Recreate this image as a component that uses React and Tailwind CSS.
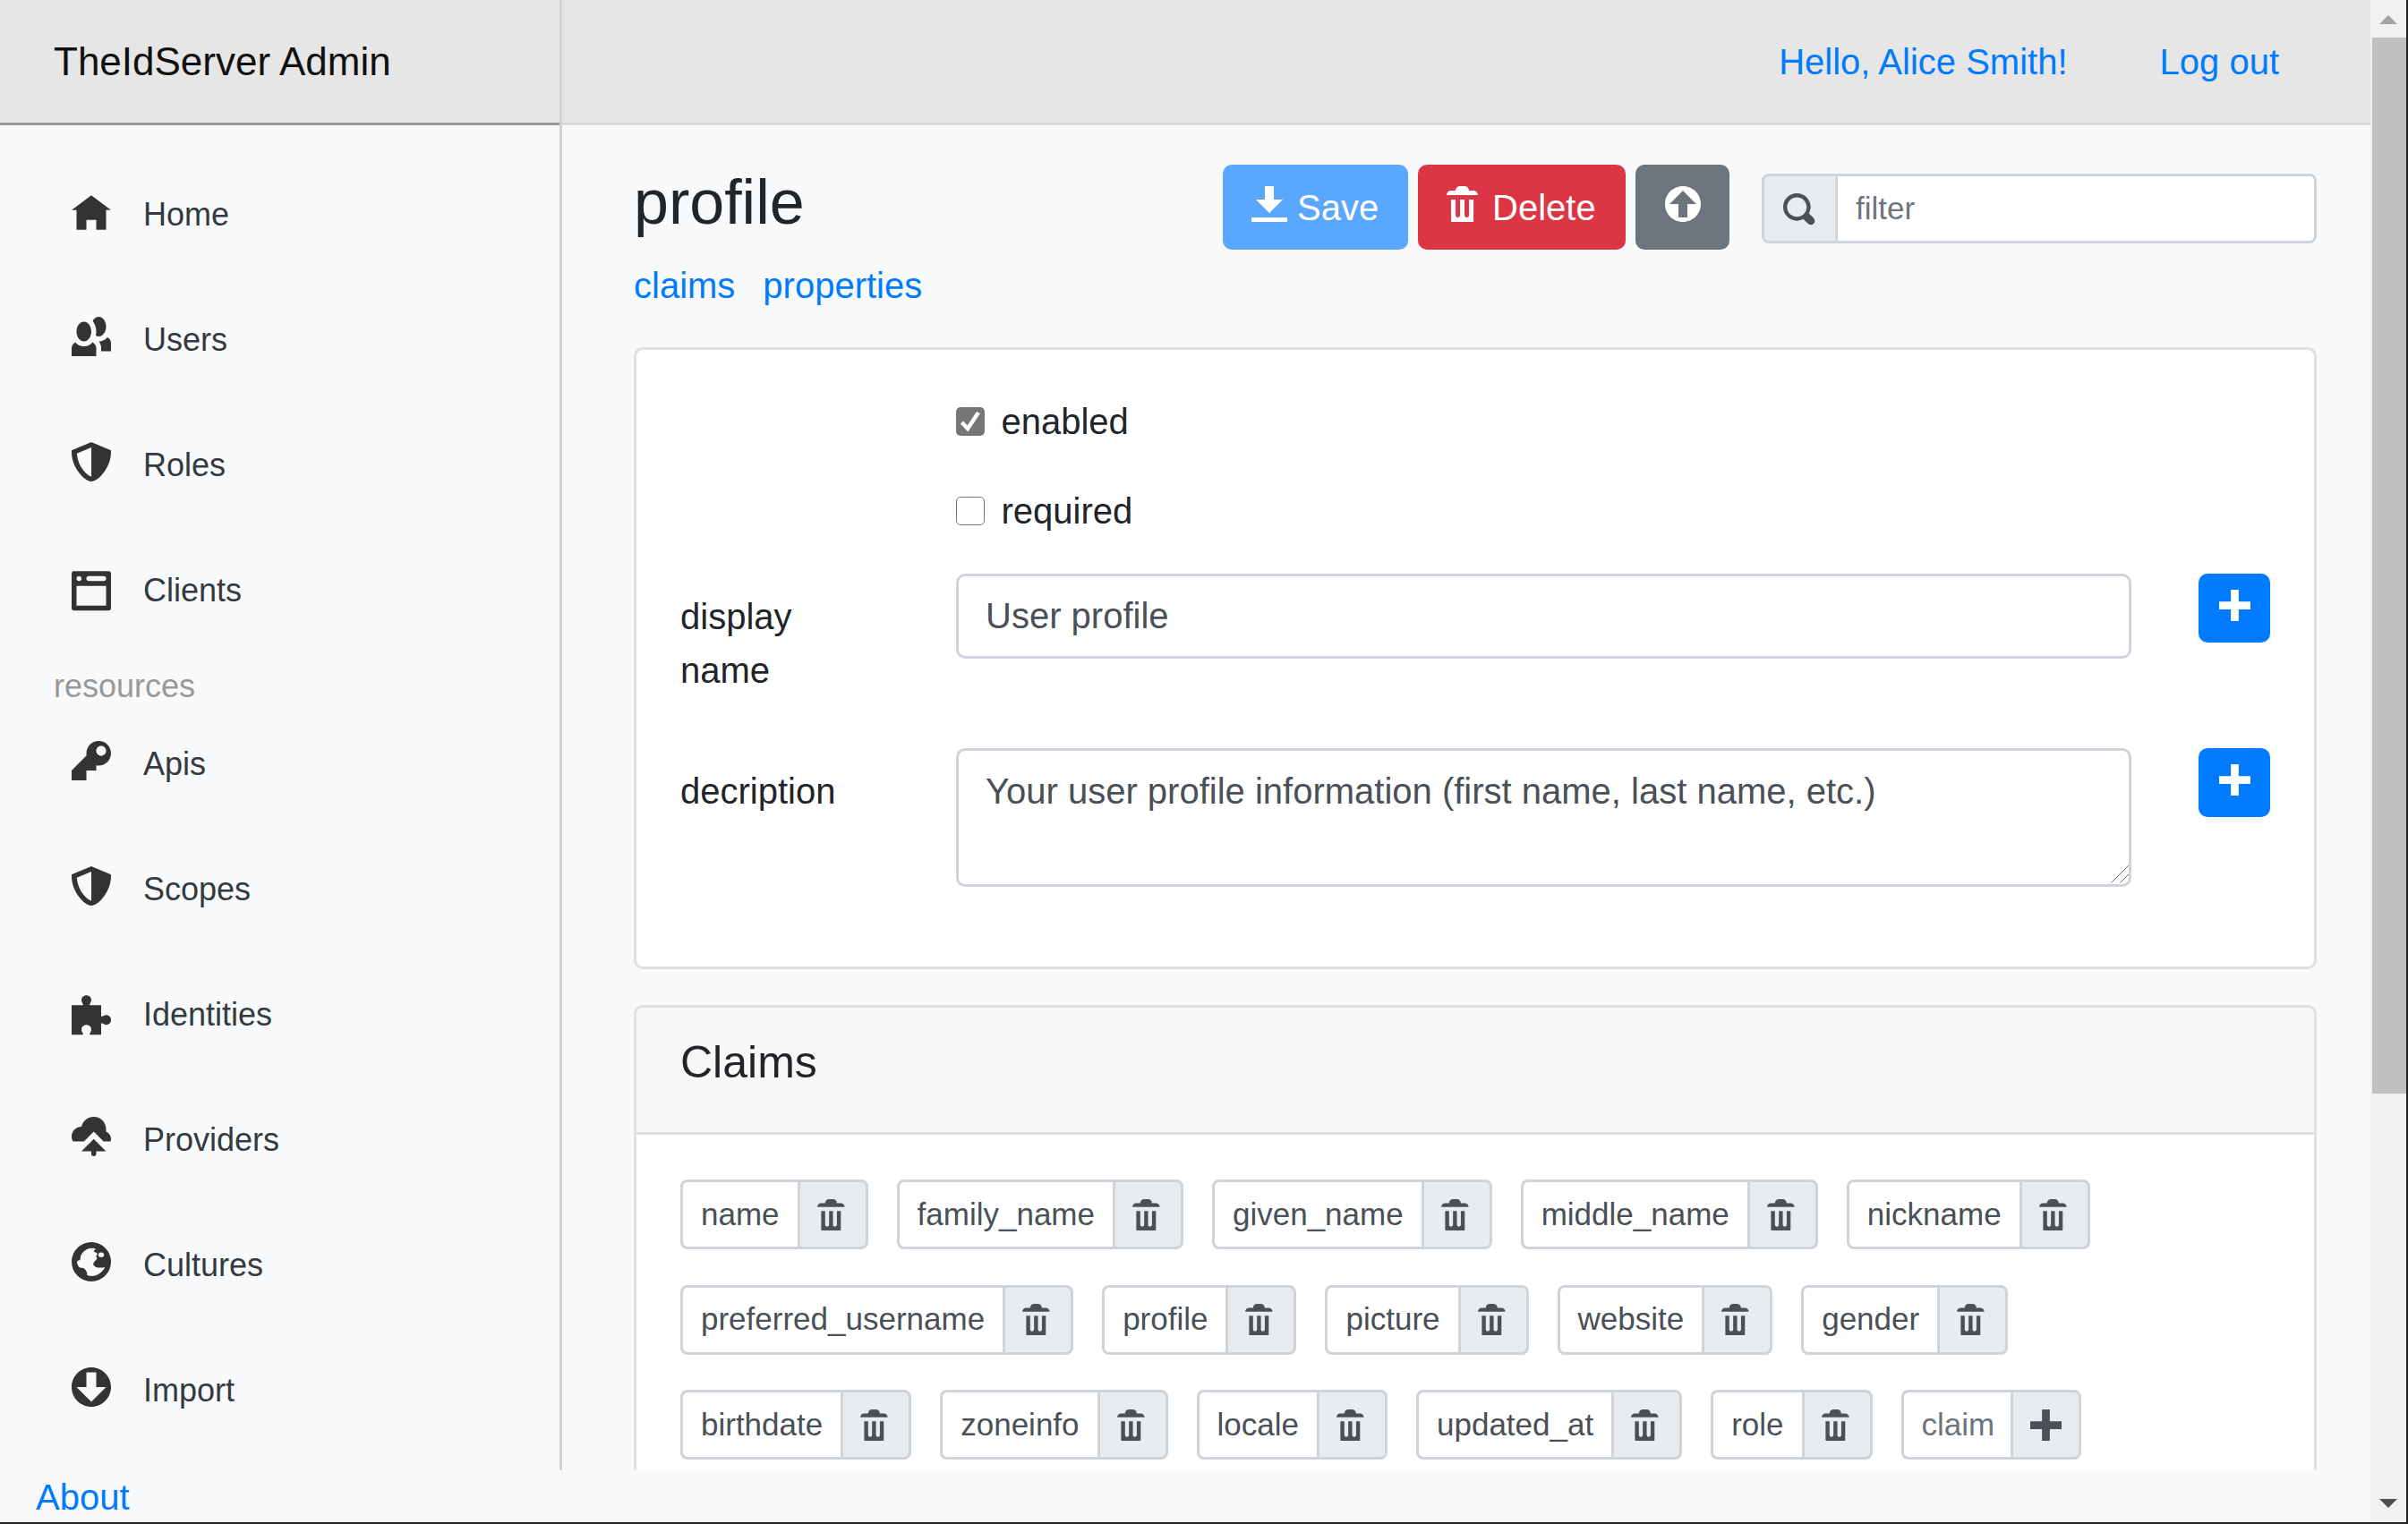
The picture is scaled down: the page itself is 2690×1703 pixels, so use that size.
import React from "react";

const P = {
  home: "M4 0l-4 3h1v4h2v-2h2v2h2v-4.03l1 .03-4-3z",
  people: "M5.5 0c-.51 0-.95.35-1.22.88.45.54.72 1.28.72 2.13 0 .29-.03.55-.09.81.19.11.38.19.59.19.83 0 1.5-.9 1.5-2s-.67-2-1.5-2zm-3 1c-.83 0-1.5.9-1.5 2s.67 2 1.5 2 1.5-.9 1.5-2-.67-2-1.5-2zm4.75 3.16c-.43.51-1.02.82-1.69.84.27.38.44.84.44 1.34v.66h2v-1.66c0-.52-.31-.97-.75-1.19zm-6.5 1c-.44.22-.75.67-.75 1.19v1.66h5v-1.66c0-.52-.31-.97-.75-1.19-.45.53-1.06.84-1.75.84s-1.3-.32-1.75-.84z",
  shield: "M4 0l-.19.09-3.5 1.47-.31.13v.31c0 1.66.67 3.12 1.47 4.19.4.53.83.97 1.25 1.28.42.31.83.53 1.28.53.46 0 .86-.22 1.28-.53.42-.31.85-.75 1.25-1.28.8-1.07 1.47-2.53 1.47-4.19v-.31l-.31-.13-3.5-1.47-.19-.09zm0 1.09v5.91c-.04 0-.33-.07-.66-.31s-.71-.63-1.06-1.09c-.64-.85-1.14-2.03-1.22-3.28l2.94-1.22z",
  browser: "M.34 0a.5.5 0 0 0-.34.5v7a.5.5 0 0 0 .5.5h7a.5.5 0 0 0 .5-.5v-7a.5.5 0 0 0-.5-.5h-7a.5.5 0 0 0-.09 0 .5.5 0 0 0-.06 0zm1.16 1a.5.5 0 1 1 0 1 .5.5 0 0 1 0-1zm2 0h3a.5.5 0 1 1 0 1h-3a.5.5 0 1 1 0-1zm-2.5 2h6v4h-6v-4z",
  key: "M5.5 0c-1.38 0-2.5 1.12-2.5 2.5 0 .16 0 .32.03.47l-3.03 3.03v2h3v-2h2v-1l.03-.03c.15.03.31.03.47.03 1.38 0 2.5-1.12 2.5-2.5s-1.12-2.5-2.5-2.5zm.5 1c.55 0 1 .45 1 1s-.45 1-1 1-1-.45-1-1 .45-1 1-1z",
  puzzle: "M3 0c-.28 0-.54.1-.72.28-.18.18-.28.44-.28.72 0 .28.18.48.28.72.03.06.03.16.03.28h-2.31v6h2.31c0-.12-.01-.22-.03-.28-.1-.24-.28-.44-.28-.72 0-.28.1-.54.28-.72.18-.18.44-.28.72-.28.28 0 .54.1.72.28.18.18.28.44.28.72 0 .28-.18.48-.28.72-.03.06-.03.16-.03.28h2.31v-2.31c.12 0 .22.01.28.03.24.1.44.28.72.28.28 0 .54-.1.72-.28.18-.18.28-.44.28-.72 0-.28-.1-.54-.28-.72-.18-.18-.44-.28-.72-.28-.28 0-.48.18-.72.28-.06.03-.16.03-.28.03v-2.31h-2.31c0-.12.01-.22.03-.28.1-.24.28-.44.28-.72 0-.28-.1-.54-.28-.72-.18-.18-.44-.28-.72-.28z",
  cloud: "M4.5 0c-1.21 0-2.27.86-2.5 2-1.1 0-2 .9-2 2 0 .37.11.71.28 1h2.22l2-2 2 2h1.41c.06-.16.09-.32.09-.5 0-.65-.42-1.29-1-1.5v-.5c0-1.38-1.12-2.5-2.5-2.5zm0 4.5l-2.5 2.5h2v.5a.5.5 0 1 0 1 0v-.5h2l-2.5-2.5z",
  globe: "M4 0a4 4 0 1 0 0 8 4 4 0 0 0 0-8zM3.9 1.2c.4 0 .7.1 1 .2-.2.2-.4.3-.4.5 0 .2.7.1.7.5 0 .3-.4.4-.1.7.3.3-.6.9-.7 1.3 0 .6.8.8 1.5.8.4 0 .6 0 .9-.1-.5 1-1.5 1.8-2.8 1.8-.4 0-.7-.1-.9-.2.2-.4-.2-1-.5-1.3-.3-.2-.8-.1-1.1-.3-.2-.3-.4-.7-.4-1.1 0-.1.3-.3.5-.3.3-.1.1-.6.3-1 .5-.9 1.3-1.5 2.5-1.5zM6 2.1a.6.5 0 1 0 .01 0z",
  down: "M4 0c-2.2 0-4 1.8-4 4s1.8 4 4 4 4-1.8 4-4-1.8-4-4-4zm-1 1h2v3h2l-3 3-3-3h2v-3z",
  up: "M4 0c-2.21 0-4 1.79-4 4s1.79 4 4 4 4-1.79 4-4-1.79-4-4-4zm0 1l3 3h-2v3h-2v-3h-2l3-3z",
  download: "M3 0v3h-2l3 3 3-3h-2v-3h-2zm-3 7v1h8v-1h-8z",
  trash: "M3 0c-.55 0-1 .45-1 1h-1c-.55 0-1 .45-1 1h7c0-.55-.45-1-1-1h-1c0-.55-.45-1-1-1h-1zm-2 3v4.81c0 .11.08.19.19.19h4.63c.11 0 .19-.08.19-.19v-4.81h-1v3.5c0 .28-.22.5-.5.5s-.5-.22-.5-.5v-3.5h-1v3.5c0 .28-.22.5-.5.5s-.5-.22-.5-.5v-3.5h-1z",
  search: "M3.5 0c-1.93 0-3.5 1.57-3.5 3.5s1.57 3.5 3.5 3.5c.59 0 1.17-.14 1.66-.41a1 1 0 0 0 .13.13l1 1a1.02 1.02 0 1 0 1.44-1.44l-1-1a1 1 0 0 0-.16-.13c.27-.49.44-1.06.44-1.66 0-1.93-1.57-3.5-3.5-3.5zm0 1c1.39 0 2.5 1.11 2.5 2.5 0 .66-.24 1.27-.66 1.72-.01.01-.02.02-.03.03a1 1 0 0 0-.13.13c-.44.4-1.04.63-1.69.63-1.39 0-2.5-1.11-2.5-2.5s1.11-2.5 2.5-2.5z",
  plus: "M3 0v3h-3v2h3v3h2v-3h3v-2h-3v-3h-2z",
};

function Oi({ name, className, vb = "0 0 8 8" }) {
  return (
    <svg viewBox={vb} className={className} fill="currentColor" overflow="visible">
      <path d={P[name]} fillRule="evenodd" />
    </svg>
  );
}

function NavRow({ icon, label, vb }) {
  return (
    <div className="flex items-center h-[120px] mb-[20px] pl-[80px] gap-[36px] text-[36px] text-[#343a40]">
      <Oi name={icon} vb={vb} className="w-[44px] h-[44px] mb-[8px] shrink-0 text-[#333333]" />
      <span>{label}</span>
    </div>
  );
}

function Sidebar() {
  return (
    <aside className="w-[628px] shrink-0 h-full border-r-[3px] border-[#d3d3d3] overflow-hidden">
      <div className="h-[140px] border-b-[3px] border-[#999999] bg-[#e6e6e6] flex items-center pl-[60px] text-[44px] text-[#111111]">
        TheIdServer Admin
      </div>
      <nav className="pt-[40px]">
        <NavRow icon="home" label="Home" vb="0 -0.75 8 8" />
        <NavRow icon="people" label="Users" />
        <NavRow icon="shield" label="Roles" />
        <NavRow icon="browser" label="Clients" vb="0 -0.75 8 8" />
        <div className="h-[54px] pl-[60px] text-[36px] leading-[54px] text-[#999999]">resources</div>
        <NavRow icon="key" label="Apis" />
        <NavRow icon="shield" label="Scopes" />
        <NavRow icon="puzzle" label="Identities" vb="0 -0.75 8 8" />
        <NavRow icon="cloud" label="Providers" />
        <NavRow icon="globe" label="Cultures" />
        <NavRow icon="down" label="Import" />
      </nav>
    </aside>
  );
}

function Btn({ bg, icon, label, pad }) {
  return (
    <button className={`h-[95px] rounded-[10px] text-white text-[40px] flex items-center gap-[11px] ${bg} ${pad}`}>
      <Oi name={icon} className="w-[40px] h-[40px] mb-[7px] shrink-0" />
      {label ? <span>{label}</span> : null}
    </button>
  );
}

function Check({ checked }) {
  return (
    <span className="relative w-[32px] h-[32px] shrink-0 block">
      <input
        type="checkbox"
        readOnly
        checked={checked}
        className={checked
          ? "appearance-none block w-[32px] h-[32px] rounded-[5px] bg-[#767676]"
          : "appearance-none block w-[32px] h-[32px] rounded-[5px] bg-white border border-[#767676]"}
      />
      {checked ? (
        <svg viewBox="0 0 32 32" className="absolute inset-0 w-[32px] h-[32px]" fill="none" stroke="#ffffff" strokeWidth="4.5">
          <path d="M6.5 17l6.5 7 12-18" />
        </svg>
      ) : null}
    </span>
  );
}

function AddBtn() {
  return (
    <button className="w-[80px] h-[77px] rounded-[10px] bg-[#007bff] text-white flex items-start justify-center pt-[18px] shrink-0">
      <Oi name="plus" className="w-[35px] h-[35px]" />
    </button>
  );
}

function FormCard() {
  return (
    <div className="mt-[39px] h-[695px] bg-white border-[3px] border-[#dfdfdf] rounded-[10px] pl-[49px] pt-[50px] text-[40px] leading-[60px] text-[#212529]">
      <div className="flex items-center h-[60px] pl-[308px] gap-[18.5px]">
        <Check checked />
        <span>enabled</span>
      </div>
      <div className="flex items-center h-[60px] mt-[40px] pl-[308px] gap-[18.5px]">
        <Check checked={false} />
        <span>required</span>
      </div>
      <div className="flex mt-[40px] h-[195px]">
        <label className="w-[308px] shrink-0 pt-[18px] pr-[120px]">display name</label>
        <input
          readOnly
          value="User profile"
          className="w-[1313px] h-[95px] border-[3px] border-[#ced4da] rounded-[10px] pl-[30px] text-[#495057] bg-white"
        />
        <div className="ml-[75px]"><AddBtn /></div>
      </div>
      <div className="flex">
        <label className="w-[308px] shrink-0 pt-[18px]">decription</label>
        <div className="relative w-[1313px] h-[155px]">
          <textarea
            readOnly
            value="Your user profile information (first name, last name, etc.)"
            className="block w-full h-full resize-none border-[3px] border-[#ced4da] rounded-[10px] pl-[30px] pt-[15px] leading-[60px] text-[#495057] bg-white"
          />
          <svg viewBox="0 0 20 20" className="absolute right-[3px] bottom-[4px] w-[20px] h-[20px]" stroke="#6e6e6e" strokeWidth="1" fill="none">
            <path d="M0.5 19.5L20 0M10.5 19.5L20 10" />
          </svg>
        </div>
        <div className="ml-[75px]"><AddBtn /></div>
      </div>
    </div>
  );
}

const ROWS = [
  ["name", "family_name", "given_name", "middle_name", "nickname"],
  ["preferred_username", "profile", "picture", "website", "gender"],
  ["birthdate", "zoneinfo", "locale", "updated_at", "role"],
];

function Chip({ text }) {
  return (
    <div className="flex h-[78px] text-[35px] text-[#495057]">
      <div className="border-[3px] border-r-0 border-[#ced4da] rounded-l-[8px] px-[20px] flex items-center bg-white">{text}</div>
      <div className="border-[3px] border-[#ced4da] rounded-r-[8px] bg-[#e9ecef] px-[19px] flex items-center">
        <Oi name="trash" className="w-[35px] h-[35px] text-[#495057]" />
      </div>
    </div>
  );
}

function ClaimsCard() {
  return (
    <div className="mt-[40px] bg-white border-[3px] border-[#dfdfdf] rounded-t-[10px] h-[640px]">
      <div className="h-[142px] bg-[#f7f7f7] border-b-[3px] border-[#dfdfdf] rounded-t-[7px] pl-[49px] pt-[31px] text-[50px] leading-[60px] text-[#212529]">
        Claims
      </div>
      <div className="pl-[49px] pt-[50px] flex flex-col gap-y-[39.5px]">
        {ROWS.map((row, i) => (
          <div key={i} className="flex gap-x-[32px]">
            {row.map((t) => <Chip key={t} text={t} />)}
            {i === 2 ? (
              <div className="flex h-[78px] text-[35px]">
                <input
                  readOnly
                  placeholder="claim"
                  className="w-[122px] border-[3px] border-r-0 border-[#ced4da] rounded-l-[8px] pl-[20px] bg-white placeholder:text-[#6c757d]"
                />
                <div className="border-[3px] border-[#ced4da] rounded-r-[8px] bg-[#e9ecef] px-[19px] flex items-center">
                  <Oi name="plus" className="w-[35px] h-[35px] text-[#495057]" />
                </div>
              </div>
            ) : null}
          </div>
        ))}
      </div>
    </div>
  );
}

function Main() {
  return (
    <main className="flex-1 min-w-0 h-full overflow-hidden">
      <header className="h-[140px] bg-[#e6e6e6] border-b-[3px] border-[#d8d8d8] flex items-center justify-end pr-[102px] gap-[103px] text-[40px] text-[#007bff]">
        <a>Hello, Alice Smith!</a>
        <a>Log out</a>
      </header>
      <div className="pl-[80px] pr-[60px] pt-[44px]">
        <div className="flex items-start">
          <div>
            <h3 className="text-[70px] leading-[84px] text-[#212529]">profile</h3>
            <div className="mt-[21px] flex gap-[31px] text-[40px] leading-[60px] text-[#007bff]">
              <a>claims</a>
              <a>properties</a>
            </div>
          </div>
          <div className="ml-auto flex items-start gap-[11px]">
            <Btn bg="bg-[#5aa7ff]" icon="download" label="Save" pad="pl-[32px] w-[207px]" />
            <Btn bg="bg-[#dc3545]" icon="trash" label="Delete" pad="pl-[32px] w-[232px]" />
            <Btn bg="bg-[#6c757d]" icon="up" pad="pl-[33px] w-[105px]" />
            <div className="flex ml-[25px] mt-[10px] w-[620px] h-[78px] text-[35px]">
              <div className="w-[85px] shrink-0 border-[3px] border-[#ced4da] rounded-l-[8px] bg-[#e9ecef] flex items-center justify-center">
                <Oi name="search" className="w-[35px] h-[35px] mr-[3px] text-[#495057]" />
              </div>
              <input
                readOnly
                placeholder="filter"
                className="flex-1 min-w-0 border-[3px] border-l-0 border-[#ced4da] rounded-r-[8px] pl-[20px] bg-white placeholder:text-[#6c757d]"
              />
            </div>
          </div>
        </div>
        <FormCard />
        <ClaimsCard />
      </div>
    </main>
  );
}

function Scrollbar() {
  return (
    <div className="w-[42px] shrink-0 h-full bg-[#f1f1f1] border-r-[2px] border-[#222222] flex flex-col">
      <div className="h-[42px] flex items-center justify-center shrink-0">
        <svg viewBox="0 0 20 10" className="w-[20px] h-[10px] mt-[2px]" fill="#a3a3a3"><path d="M10 0L20 10H0z" /></svg>
      </div>
      <div className="h-[1180px] ml-[2px] bg-[#c1c1c1] shrink-0" />
      <div className="flex-1" />
      <div className="h-[42px] flex items-center justify-center shrink-0">
        <svg viewBox="0 0 20 10" className="w-[20px] h-[10px]" fill="#505050"><path d="M0 0H20L10 10z" /></svg>
      </div>
    </div>
  );
}

export default function App() {
  return (
    <div className="w-[2690px] h-[1703px] overflow-hidden flex border-b-[2px] border-[#222222] bg-[#f8f9fa] font-['Liberation_Sans',Arial,sans-serif]">
      <div className="flex-1 min-w-0 flex flex-col h-full">
        <div className="h-[1643px] shrink-0 flex">
          <Sidebar />
          <Main />
        </div>
        <div className="flex-1 pl-[40px] flex items-center text-[40px] text-[#007bff]">
          <a>About</a>
        </div>
      </div>
      <Scrollbar />
    </div>
  );
}
